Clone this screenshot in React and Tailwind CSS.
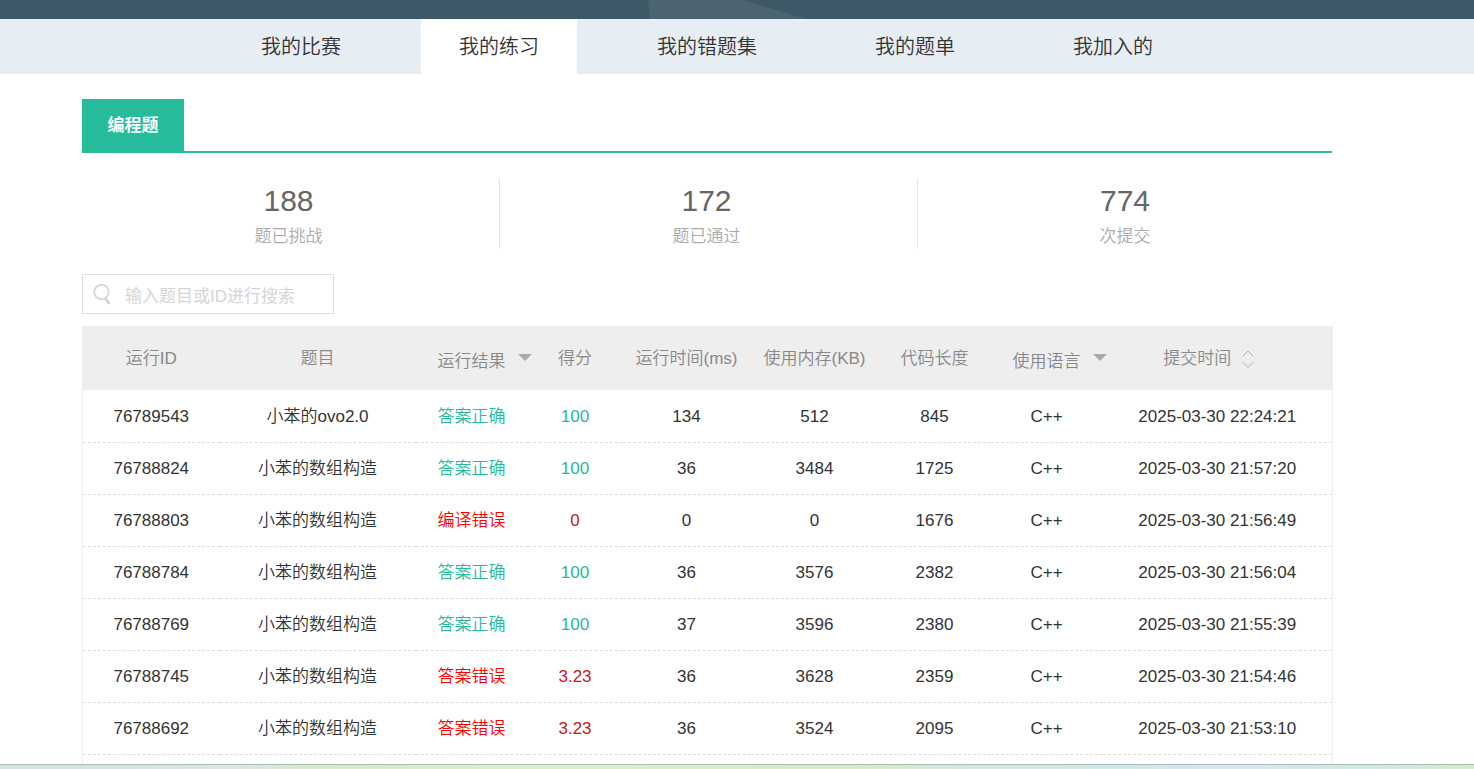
import React, { useState } from 'react';
import clsx from 'clsx';

const navItems = ['我的比赛', '我的练习', '我的错题集', '我的题单', '我加入的'];

const stats = [
  { value: 188, label: '题已挑战' },
  { value: 172, label: '题已通过' },
  { value: 774, label: '次提交' },
];

const submissions = [
  { id: 76789543, problem: '小苯的ovo2.0', result: '答案正确', score: 100, time: 134, memory: 512, length: 845, date: '2025-03-30 22:24:21' },
  { id: 76788824, problem: '小苯的数组构造', result: '答案正确', score: 100, time: 36, memory: 3484, length: 1725, date: '2025-03-30 21:57:20' },
  { id: 76788803, problem: '小苯的数组构造', result: '编译错误', score: 0, time: 0, memory: 0, length: 1676, date: '2025-03-30 21:56:49' },
  { id: 76788784, problem: '小苯的数组构造', result: '答案正确', score: 100, time: 36, memory: 3576, length: 2382, date: '2025-03-30 21:56:04' },
  { id: 76788769, problem: '小苯的数组构造', result: '答案正确', score: 100, time: 37, memory: 3596, length: 2380, date: '2025-03-30 21:55:39' },
  { id: 76788745, problem: '小苯的数组构造', result: '答案错误', score: 3.23, time: 36, memory: 3628, length: 2359, date: '2025-03-30 21:54:46' },
  { id: 76788692, problem: '小苯的数组构造', result: '答案错误', score: 3.23, time: 36, memory: 3524, length: 2095, date: '2025-03-30 21:53:10' },
];

function FilterButton({ children }) {
  return (
    <button type="button" aria-haspopup="menu" className="relative pt-1.5 align-middle">
      {children}
      <svg className="absolute top-3 left-full ml-3" width="14" height="8" viewBox="0 0 14 8" aria-hidden="true">
        <path d="M0 0h14L7 7z" fill="#aaa" />
      </svg>
    </button>
  );
}

function SortButton({ children }) {
  return (
    <button type="button" className="inline-flex items-center gap-2.5 pr-4 align-middle">
      {children}
      <svg width="14" height="18" viewBox="0 0 14 18" fill="none" stroke="#aaa" aria-hidden="true">
        <path d="M1.500 6.500L7 1l5.500 5.500M1.500 12L7 17.500l5.500-5.500" />
      </svg>
    </button>
  );
}

function SubmissionRow({ row }) {
  const accepted = row.result === '答案正确';
  return (
    <tr className="h-[52px] border-b border-dashed border-[#ddd] *:pt-0.5">
      <td><a href="#run">{row.id}</a></td>
      <td><a href="#problem">{row.problem}</a></td>
      <td className={accepted ? 'text-[#25bb9b]' : 'text-[#f00]'}>{row.result}</td>
      <td className={accepted ? 'text-[#25bb9b]' : 'text-[#c7161d]'}>{row.score}</td>
      <td>{row.time}</td>
      <td>{row.memory}</td>
      <td>{row.length}</td>
      <td>C++</td>
      <td>{row.date}</td>
    </tr>
  );
}

export default function App() {
  const [active, setActive] = useState('我的练习');
  const [keyword, setKeyword] = useState('');

  const rows = submissions.filter((s) => s.problem.includes(keyword) || String(s.id).includes(keyword));

  return (
    <div className="flex h-screen flex-col overflow-hidden bg-white font-['Liberation_Sans','Noto_Sans_CJK_SC',sans-serif] text-[17px] leading-7 font-[350] text-[#333]">
      {/* Bottom edge of the profile banner */}
      <header className="h-[19px] shrink-0 bg-[#3d5866]">
        <svg className="block h-[19px] w-full" viewBox="0 0 1474 19" preserveAspectRatio="none" aria-hidden="true">
          <path d="M648 0h96l62 19H650z" fill="#4b6470" />
        </svg>
      </header>

      <nav className="flex h-[55px] shrink-0 justify-center gap-[42px] bg-[#e6edf3] pr-[142px] pl-[82px] text-xl">
        {navItems.map((item) => (
          <a
            key={item}
            href="#tab"
            onClick={() => setActive(item)}
            className={clsx('flex items-center px-[38px] whitespace-nowrap', item === active && 'bg-white')}
          >
            {item}
          </a>
        ))}
      </nav>

      <main className="min-h-0 flex-1 overflow-hidden pt-[25px] pr-[142px] pl-[82px]">
        <div className="flex border-b-2 border-[#25bb9b]">
          <button type="button" className="h-[52px] w-[102px] bg-[#25bb9b] pt-0.5 font-bold text-white">编程题</button>
        </div>

        {/* Totals */}
        <dl className="mt-[25px] -mr-1 grid grid-cols-3 divide-x divide-[#e5e5e5] text-center">
          {stats.map((s) => (
            <div key={s.label} className="flex h-[71px] flex-col-reverse justify-end pr-1">
              <dt className="leading-[26px] text-[#aaa]">{s.label}</dt>
              <dd className="text-3xl leading-[46px] text-[#666]">{s.value}</dd>
            </div>
          ))}
        </dl>

        <label className="mt-[25px] flex h-10 w-[252px] items-center gap-3 border border-[#ddd] pl-[10px]">
          <svg className="shrink-0" width="20" height="22" viewBox="0 0 20 22" fill="none" stroke="#d5d5d5" aria-hidden="true">
            <circle cx="8.500" cy="9" r="7.200" strokeWidth="1.800" />
            <path d="M12.500 15.500l3 4.500" strokeWidth="3" strokeLinecap="round" />
          </svg>
          <input
            type="text"
            aria-label="搜索"
            value={keyword}
            onChange={(e) => setKeyword(e.target.value)}
            placeholder="输入题目或ID进行搜索"
            className="w-full min-w-0 pt-1.5 font-normal outline-none placeholder:text-[#d5d5d5]"
          />
        </label>

        <table className="mt-3 w-full table-fixed border-collapse border border-t-0 border-[#eee] text-center">
          <colgroup>
            <col className="w-[137px]" />
            <col className="w-[196px]" />
            <col className="w-[112px]" />
            <col className="w-[95px]" />
            <col className="w-[128px]" />
            <col className="w-[128px]" />
            <col className="w-[112px]" />
            <col className="w-[112px]" />
            <col className="w-[230px]" />
          </colgroup>
          <thead>
            <tr className="h-16 bg-[#eee] whitespace-nowrap text-[#888] *:pt-0.5 *:font-[350]">
              <th>运行ID</th>
              <th>题目</th>
              <th><FilterButton>运行结果</FilterButton></th>
              <th>得分</th>
              <th>运行时间(ms)</th>
              <th>使用内存(KB)</th>
              <th>代码长度</th>
              <th><FilterButton>使用语言</FilterButton></th>
              <th><SortButton>提交时间</SortButton></th>
            </tr>
          </thead>
          <tbody>
            {rows.map((row) => (
              <SubmissionRow key={row.id} row={row} />
            ))}
            <tr className="h-[52px]">
              <td colSpan={9} />
            </tr>
          </tbody>
        </table>
      </main>

      <footer className="h-[5px] shrink-0 border-t border-[#a9b9b5] bg-[linear-gradient(to_right,#d5e2e5_0%,#d6e3e5_10%,#e0e5e0_15%,#d8ecc6_23%,#dcefc0_35%,#d9edc0_58%,#d3e8e0_66%,#cfe9ee_76%,#d5e8f2_84%,#cfe9ea_92%,#d3efc8_100%)]" />
    </div>
  );
}
